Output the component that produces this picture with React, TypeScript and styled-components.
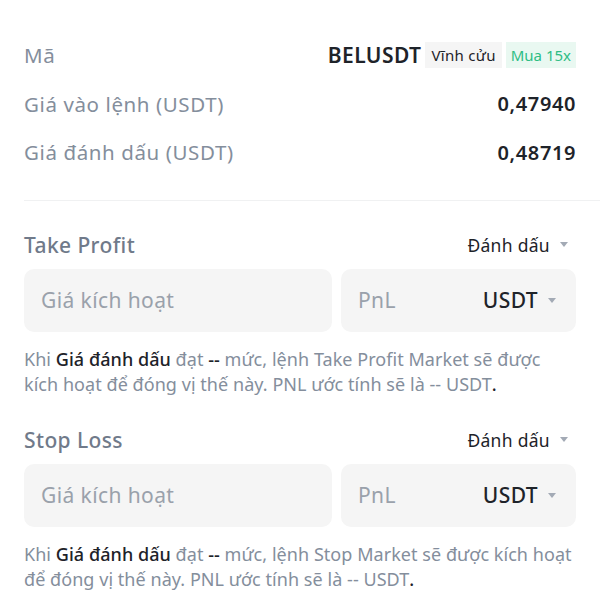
import React from "react";
import styled, { createGlobalStyle } from "styled-components";

const Global = createGlobalStyle`
  html, body { margin: 0; padding: 0; background: #ffffff; }
  body { font-family: "Noto Sans", "Open Sans", sans-serif; -webkit-font-smoothing: antialiased; }
`;

const Page = styled.div`
  width: 600px;
  height: 600px;
  box-sizing: border-box;
  padding: 31px 24px 0 24px;
  background: #fff;
  overflow: hidden;
`;

const InfoRow = styled.div`
  height: 48.5px;
  display: flex;
  align-items: center;
  justify-content: space-between;
`;

const Label = styled.span`
  font-size: 20.5px;
  color: #848e9c;
  letter-spacing: 0.6px;
`;

const Value = styled.span`
  font-size: 20px;
  font-weight: 600;
  color: #1e2329;
  letter-spacing: 0.6px;
`;

const Symbol = styled.div`
  display: flex;
  align-items: center;
  gap: 4px;
`;

const SymbolName = styled.span`
  font-size: 21px;
  font-weight: 600;
  color: #1e2329;
  letter-spacing: 0.4px;
`;

const Tag = styled.span<{ $tone: "gray" | "green" }>`
  font-size: 15px;
  line-height: 26px;
  padding: 0 ${(p) => (p.$tone === "green" ? "5px" : "6px")};
  background: ${(p) => (p.$tone === "green" ? "#e9f8f1" : "#f5f5f5")};
  color: ${(p) => (p.$tone === "green" ? "#2ebd85" : "#1e2329")};
  letter-spacing: ${(p) => (p.$tone === "green" ? "0" : "0.3px")};
`;

const Divider = styled.div`
  height: 1px;
  background: #f0f1f2;
  margin: 23px -24px 0 0;
`;

const Section = styled.div<{ $first?: boolean }>`
  padding-top: ${(p) => (p.$first ? "24px" : "23px")};
`;

const SectionHeader = styled.div`
  height: 40px;
  display: flex;
  align-items: center;
  justify-content: space-between;
  margin-bottom: 4px;
`;

const SectionTitle = styled.span`
  font-size: 21px;
  font-weight: 500;
  color: #707a8a;
  letter-spacing: 0.4px;
`;

const TypeSelect = styled.span`
  display: flex;
  align-items: center;
  gap: 10px;
  font-size: 17.5px;
  color: #1e2329;
  letter-spacing: 0.3px;
  padding-right: 8px;
`;

const Caret = styled.span`
  display: inline-block;
  width: 0;
  height: 0;
  border-left: 4.5px solid transparent;
  border-right: 4.5px solid transparent;
  border-top: 5px solid #a3aab5;
`;

const Inputs = styled.div`
  display: grid;
  grid-template-columns: 308px 1fr;
  gap: 9px;
`;

const Field = styled.div`
  height: 63px;
  border-radius: 10px;
  background: #f5f5f5;
  display: flex;
  align-items: center;
  justify-content: space-between;
  padding: 0 17px;
`;

const Placeholder = styled.span`
  font-size: 21px;
  color: #9aa1ab;
  letter-spacing: 0.4px;
`;

const Unit = styled.span`
  display: flex;
  align-items: center;
  gap: 10px;
  font-size: 21px;
  font-weight: 500;
  color: #1e2329;
  letter-spacing: 0.4px;
  padding-right: 3px;
`;

const Hint = styled.p`
  margin: 15px 0 0 0;
  font-size: 18px;
  line-height: 25px;
  color: #848e9c;
  letter-spacing: 0.05px;
`;

const Strong = styled.span`
  color: #1e2329;
  font-weight: 500;
`;

function Block({ title, first, order }: { title: string; first?: boolean; order: string }) {
  return (
    <Section $first={first}>
      <SectionHeader>
        <SectionTitle>{title}</SectionTitle>
        <TypeSelect>
          Đánh dấu <Caret />
        </TypeSelect>
      </SectionHeader>
      <Inputs>
        <Field>
          <Placeholder>Giá kích hoạt</Placeholder>
        </Field>
        <Field>
          <Placeholder>PnL</Placeholder>
          <Unit>
            USDT <Caret />
          </Unit>
        </Field>
      </Inputs>
      <Hint>
        Khi <Strong>Giá đánh dấu</Strong> đạt <Strong>--</Strong> mức, lệnh {order} sẽ được kích hoạt để đóng vị thế
        này. PNL ước tính sẽ là -- USDT<Strong>.</Strong>
      </Hint>
    </Section>
  );
}

export default function App() {
  return (
    <>
      <Global />
      <Page>
        <InfoRow>
          <Label>Mã</Label>
          <Symbol>
            <SymbolName>BELUSDT</SymbolName>
            <Tag $tone="gray">Vĩnh cửu</Tag>
            <Tag $tone="green">Mua 15x</Tag>
          </Symbol>
        </InfoRow>
        <InfoRow>
          <Label>Giá vào lệnh (USDT)</Label>
          <Value>0,47940</Value>
        </InfoRow>
        <InfoRow>
          <Label>Giá đánh dấu (USDT)</Label>
          <Value>0,48719</Value>
        </InfoRow>
        <Divider />
        <Block title="Take Profit" first order="Take Profit Market" />
        <Block title="Stop Loss" order="Stop Market" />
      </Page>
    </>
  );
}
